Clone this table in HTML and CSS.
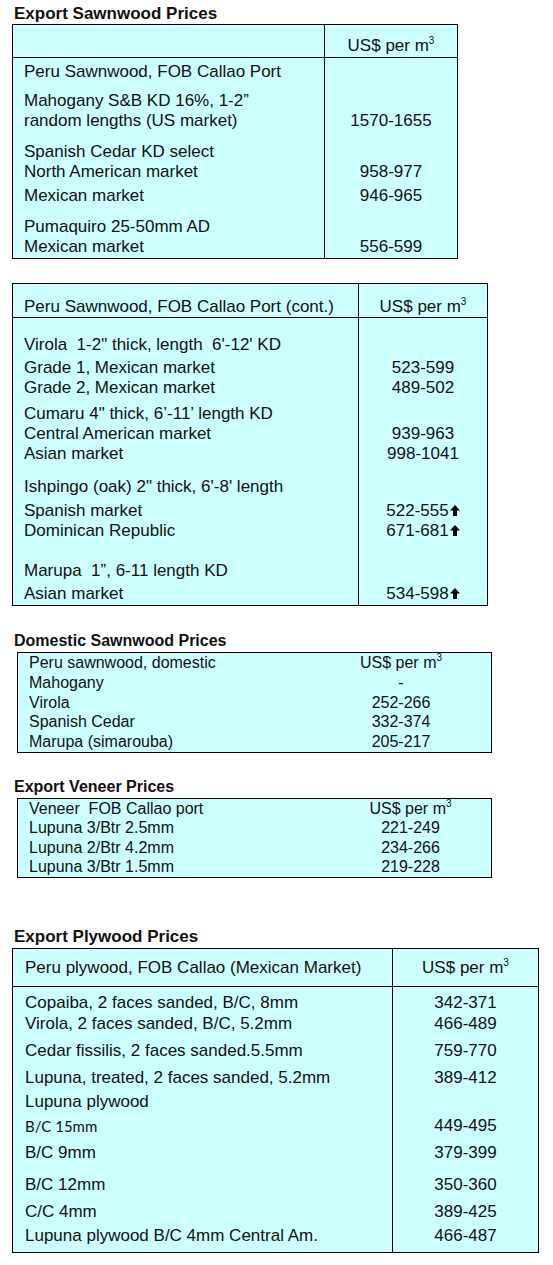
FILE: index.html
```html
<!DOCTYPE html>
<html lang="en">
<head>
<meta charset="utf-8">
<title>Peru timber prices</title>
<link rel="stylesheet" href="styles.css">
</head>
<body>
<main class="page">

  <section class="sec sec-exp">
    <h2 class="title t17">Export Sawnwood Prices</h2>
    <div class="tbl tbl-1">
      <div class="row head h1"><span class="lab"></span><span class="val">US$ per m<sup>3</sup></span></div>
      <div class="row g4"><span class="lab">Peru Sawnwood, FOB Callao Port</span><span class="val"></span></div>
      <div class="row g9"><span class="lab">Mahogany S&amp;B KD 16%, 1-2”</span><span class="val"></span></div>
      <div class="row"><span class="lab">random lengths (US market)</span><span class="val">1570-1655</span></div>
      <div class="row g11"><span class="lab">Spanish Cedar KD select</span><span class="val"></span></div>
      <div class="row"><span class="lab">North American market</span><span class="val">958-977</span></div>
      <div class="row g4"><span class="lab">Mexican market</span><span class="val">946-965</span></div>
      <div class="row g11"><span class="lab">Pumaquiro 25-50mm AD</span><span class="val"></span></div>
      <div class="row pb1"><span class="lab">Mexican market</span><span class="val">556-599</span></div>
    </div>
  </section>

  <section class="sec sec-cont">
    <div class="tbl tbl-2">
      <div class="row head h2"><span class="lab">Peru Sawnwood, FOB Callao Port (cont.)</span><span class="val">US$ per m<sup>3</sup></span></div>
      <div class="row g17"><span class="lab">Virola&nbsp; 1-2" thick, length&nbsp; 6'-12' KD</span><span class="val"></span></div>
      <div class="row g3"><span class="lab">Grade 1, Mexican market</span><span class="val">523-599</span></div>
      <div class="row"><span class="lab">Grade 2, Mexican market</span><span class="val">489-502</span></div>
      <div class="row g6"><span class="lab">Cumaru 4" thick, 6’-11’ length KD</span><span class="val"></span></div>
      <div class="row"><span class="lab">Central American market</span><span class="val">939-963</span></div>
      <div class="row"><span class="lab">Asian market</span><span class="val">998-1041</span></div>
      <div class="row g13"><span class="lab">Ishpingo (oak) 2" thick, 6'-8' length</span><span class="val"></span></div>
      <div class="row g4"><span class="lab">Spanish market</span><span class="val">522-555<svg class="up" viewBox="0 0 10 11" aria-hidden="true"><path d="M5 0 L10 5.6 L7 5.6 L7 11 L3 11 L3 5.6 L0 5.6 Z"/></svg></span></div>
      <div class="row"><span class="lab">Dominican Republic</span><span class="val">671-681<svg class="up" viewBox="0 0 10 11" aria-hidden="true"><path d="M5 0 L10 5.6 L7 5.6 L7 11 L3 11 L3 5.6 L0 5.6 Z"/></svg></span></div>
      <div class="row g20"><span class="lab">Marupa&nbsp; 1”, 6-11 length KD</span><span class="val"></span></div>
      <div class="row g3 pb1"><span class="lab">Asian market</span><span class="val">534-598<svg class="up" viewBox="0 0 10 11" aria-hidden="true"><path d="M5 0 L10 5.6 L7 5.6 L7 11 L3 11 L3 5.6 L0 5.6 Z"/></svg></span></div>
    </div>
  </section>

  <section class="sec sec-dom">
    <h2 class="title t16">Domestic Sawnwood Prices</h2>
    <div class="tbl tbl-dom">
      <div class="row"><span class="lab">Peru sawnwood, domestic</span><span class="val">US$ per m<sup>3</sup></span></div>
      <div class="row"><span class="lab">Mahogany</span><span class="val">-</span></div>
      <div class="row"><span class="lab">Virola</span><span class="val">252-266</span></div>
      <div class="row"><span class="lab">Spanish Cedar</span><span class="val">332-374</span></div>
      <div class="row"><span class="lab">Marupa (simarouba)</span><span class="val">205-217</span></div>
    </div>
  </section>

  <section class="sec sec-ven">
    <h2 class="title t16">Export Veneer Prices</h2>
    <div class="tbl tbl-ven">
      <div class="row"><span class="lab">Veneer&nbsp; FOB Callao port</span><span class="val">US$ per m<sup>3</sup></span></div>
      <div class="row"><span class="lab">Lupuna 3/Btr 2.5mm</span><span class="val">221-249</span></div>
      <div class="row"><span class="lab">Lupuna 2/Btr 4.2mm</span><span class="val">234-266</span></div>
      <div class="row"><span class="lab">Lupuna 3/Btr 1.5mm</span><span class="val">219-228</span></div>
    </div>
  </section>

  <section class="sec sec-ply">
    <h2 class="title t17">Export Plywood Prices</h2>
    <div class="tbl tbl-ply">
      <div class="row head h3"><span class="lab">Peru plywood, FOB Callao (Mexican Market)</span><span class="val">US$ per m<sup>3</sup></span></div>
      <div class="row g6"><span class="lab">Copaiba, 2 faces sanded, B/C, 8mm</span><span class="val">342-371</span></div>
      <div class="row g1"><span class="lab">Virola, 2 faces sanded, B/C, 5.2mm</span><span class="val">466-489</span></div>
      <div class="row g7"><span class="lab">Cedar fissilis, 2 faces sanded.5.5mm</span><span class="val">759-770</span></div>
      <div class="row g7"><span class="lab">Lupuna, treated, 2 faces sanded, 5.2mm</span><span class="val">389-412</span></div>
      <div class="row g4"><span class="lab">Lupuna plywood</span><span class="val"></span></div>
      <div class="row g4"><span class="lab alt">B/C 15mm</span><span class="val">449-495</span></div>
      <div class="row g7"><span class="lab">B/C 9mm</span><span class="val">379-399</span></div>
      <div class="row g12"><span class="lab">B/C 12mm</span><span class="val">350-360</span></div>
      <div class="row g7"><span class="lab">C/C 4mm</span><span class="val">389-425</span></div>
      <div class="row g4 pb6"><span class="lab">Lupuna plywood B/C 4mm Central Am.</span><span class="val">466-487</span></div>
    </div>
  </section>

</main>
</body>
</html>
```

FILE: styles.css
```css
html, body {
  margin: 0;
  padding: 0;
  background: #ffffff;
}

body {
  font-family: "Liberation Sans", Arial, sans-serif;
  color: #111111;
}

.page {
  padding: 4px 0 0 12px;
}

.sec {
  display: flex;
  flex-direction: column;
  align-items: flex-start;
}

.title {
  margin: 0;
  padding-left: 2px;
  font-weight: bold;
  line-height: 20px;
  color: #111111;
}

.t17 { font-size: 17px; }
.t16 { font-size: 16px; }

.tbl {
  box-sizing: border-box;
  border: 1px solid #000000;
  background: #ccffff;
  font-size: 17px;
}

.row {
  display: grid;
  grid-template-columns: var(--c1) 1fr;
  line-height: 20px;
  white-space: nowrap;
}

.lab {
  box-sizing: border-box;
  padding-left: 11px;
}

.val {
  text-align: center;
}

sup {
  font-size: 10px;
  line-height: 0;
  vertical-align: 7px;
}

.up {
  width: 10px;
  height: 11px;
  margin-left: 1px;
  vertical-align: 0;
  fill: #000000;
}

/* gap classes: padding on cells keeps the column divider continuous */
.g1 > * { padding-top: 1px; }
.g3 > * { padding-top: 3px; }
.g4 > * { padding-top: 4px; }
.g6 > * { padding-top: 6px; }
.g7 > * { padding-top: 7px; }
.g9 > * { padding-top: 9px; }
.g11 > * { padding-top: 11px; }
.g12 > * { padding-top: 12px; }
.g13 > * { padding-top: 13px; }
.g17 > * { padding-top: 17px; }
.g20 > * { padding-top: 20px; }
.pb1 > * { padding-bottom: 1px; }
.pb6 > * { padding-bottom: 6px; }

.head {
  border-bottom: 1px solid #000000;
}

.h1 > * { padding-top: 11px; padding-bottom: 1px; }
.h2 > * { padding-top: 13px; }
.h3 > * { padding-top: 9px; padding-bottom: 8px; }

/* table 1 */
.tbl-1 {
  width: 446px;
  --c1: 312px;
}
.tbl-1 .lab,
.tbl-2 .lab,
.tbl-ply .lab {
  border-right: 1px solid #000000;
}

/* table 2 */
.sec-cont {
  margin-top: 24px;
}
.tbl-2 {
  width: 476px;
  --c1: 346px;
}

/* domestic */
.sec-dom {
  margin-top: 25px;
}
.sec-dom .tbl,
.sec-ven .tbl {
  margin-top: 1px;
  margin-left: 5px;
  font-size: 16px;
}
.tbl-dom {
  width: 475px;
  --c1: 293px;
}
.tbl-dom .row {
  line-height: 19.75px;
}

/* veneer */
.sec-ven {
  margin-top: 24px;
}
.tbl-ven {
  width: 475px;
  --c1: 312px;
}
.tbl-ven .row {
  line-height: 19.5px;
}

/* plywood */
.sec-ply {
  margin-top: 49px;
}
.tbl-ply {
  margin-top: 1px;
  width: 527px;
  --c1: 380px;
}
.tbl-ply .lab {
  padding-left: 12px;
}
.tbl-ply .lab.alt {
  font-family: Lato, "Open Sans", sans-serif;
  font-size: 15px;
}
```
